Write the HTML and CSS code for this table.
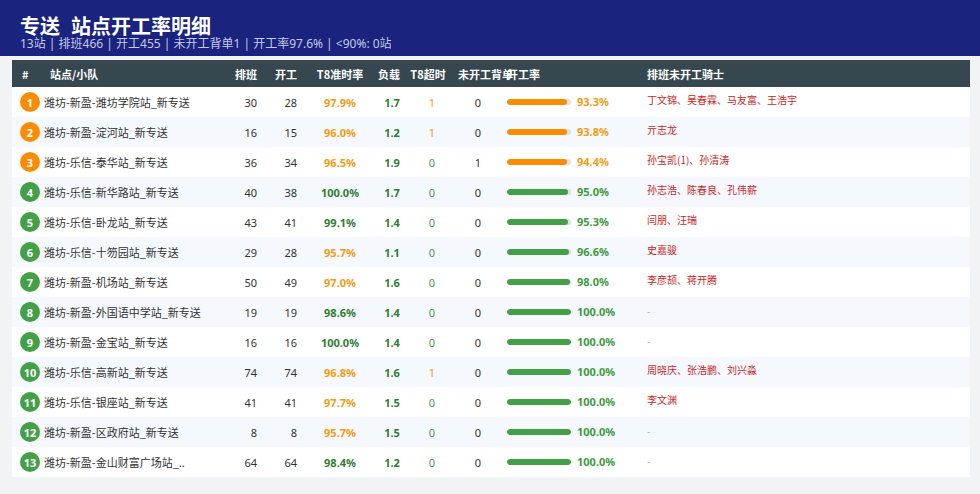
FILE: index.html
```html
<!DOCTYPE html>
<html lang="zh-CN">
<head>
<meta charset="utf-8">
<title>专送 站点开工率明细</title>
<link rel="stylesheet" href="styles.css">
</head>
<body>
<header class="banner">
  <h1 class="title"><span class="t1">专送</span>站点开工率明细</h1>
  <div class="sub">13站 | 排班466 | 开工455 | 未开工背单1 | 开工率97.6% | &lt;90%: 0站</div>
</header>
<main class="table">
  <div class="row head">
    <div class="c c1">#</div>
    <div class="c c2">站点/小队</div>
    <div class="c c3">排班</div>
    <div class="c c4">开工</div>
    <div class="c c5">T8准时率</div>
    <div class="c c6">负载</div>
    <div class="c c7">T8超时</div>
    <div class="c c8">未开工背单</div>
    <div class="c c9">开工率</div>
    <div class="c c10">排班未开工骑士</div>
  </div>

  <div class="row">
    <div class="c c1"><span class="badge or">1</span></div>
    <div class="c c2">潍坊-新盈-潍坊学院站_新专送</div>
    <div class="c c3">30</div><div class="c c4">28</div>
    <div class="c c5 b or-t">97.9%</div><div class="c c6 b gd">1.7</div>
    <div class="c c7 or-t">1</div><div class="c c8">0</div>
    <div class="c c9"><span class="track"><span class="fill or" style="width:93.3%"></span></span><span class="pct or-t">93.3%</span></div>
    <div class="c c10 names">丁文锦、吴春霖、马友富、王浩宇</div>
  </div>
  <div class="row">
    <div class="c c1"><span class="badge or">2</span></div>
    <div class="c c2">潍坊-新盈-淀河站_新专送</div>
    <div class="c c3">16</div><div class="c c4">15</div>
    <div class="c c5 b or-t">96.0%</div><div class="c c6 b gd">1.2</div>
    <div class="c c7 or-t">1</div><div class="c c8">0</div>
    <div class="c c9"><span class="track"><span class="fill or" style="width:93.8%"></span></span><span class="pct or-t">93.8%</span></div>
    <div class="c c10 names">亓志龙</div>
  </div>
  <div class="row">
    <div class="c c1"><span class="badge or">3</span></div>
    <div class="c c2">潍坊-乐信-泰华站_新专送</div>
    <div class="c c3">36</div><div class="c c4">34</div>
    <div class="c c5 b or-t">96.5%</div><div class="c c6 b gd">1.9</div>
    <div class="c c7 gl">0</div><div class="c c8">1</div>
    <div class="c c9"><span class="track"><span class="fill or" style="width:94.4%"></span></span><span class="pct or-t">94.4%</span></div>
    <div class="c c10 names">孙宝凯(1)、孙清涛</div>
  </div>
  <div class="row">
    <div class="c c1"><span class="badge gr">4</span></div>
    <div class="c c2">潍坊-乐信-新华路站_新专送</div>
    <div class="c c3">40</div><div class="c c4">38</div>
    <div class="c c5 b gd">100.0%</div><div class="c c6 b gd">1.7</div>
    <div class="c c7 gl">0</div><div class="c c8">0</div>
    <div class="c c9"><span class="track"><span class="fill gr" style="width:95%"></span></span><span class="pct gr-t">95.0%</span></div>
    <div class="c c10 names">孙志浩、陈春良、孔伟薪</div>
  </div>
  <div class="row">
    <div class="c c1"><span class="badge gr">5</span></div>
    <div class="c c2">潍坊-乐信-卧龙站_新专送</div>
    <div class="c c3">43</div><div class="c c4">41</div>
    <div class="c c5 b gd">99.1%</div><div class="c c6 b gd">1.4</div>
    <div class="c c7 gl">0</div><div class="c c8">0</div>
    <div class="c c9"><span class="track"><span class="fill gr" style="width:95.3%"></span></span><span class="pct gr-t">95.3%</span></div>
    <div class="c c10 names">闫朋、汪瑞</div>
  </div>
  <div class="row">
    <div class="c c1"><span class="badge gr">6</span></div>
    <div class="c c2">潍坊-乐信-十笏园站_新专送</div>
    <div class="c c3">29</div><div class="c c4">28</div>
    <div class="c c5 b or-t">95.7%</div><div class="c c6 b gd">1.1</div>
    <div class="c c7 gl">0</div><div class="c c8">0</div>
    <div class="c c9"><span class="track"><span class="fill gr" style="width:96.6%"></span></span><span class="pct gr-t">96.6%</span></div>
    <div class="c c10 names">史嘉骏</div>
  </div>
  <div class="row">
    <div class="c c1"><span class="badge gr">7</span></div>
    <div class="c c2">潍坊-新盈-机场站_新专送</div>
    <div class="c c3">50</div><div class="c c4">49</div>
    <div class="c c5 b or-t">97.0%</div><div class="c c6 b gd">1.6</div>
    <div class="c c7 gl">0</div><div class="c c8">0</div>
    <div class="c c9"><span class="track"><span class="fill gr" style="width:98%"></span></span><span class="pct gr-t">98.0%</span></div>
    <div class="c c10 names">李彦颉、蒋开腾</div>
  </div>
  <div class="row">
    <div class="c c1"><span class="badge gr">8</span></div>
    <div class="c c2">潍坊-新盈-外国语中学站_新专送</div>
    <div class="c c3">19</div><div class="c c4">19</div>
    <div class="c c5 b gd">98.6%</div><div class="c c6 b gd">1.4</div>
    <div class="c c7 gl">0</div><div class="c c8">0</div>
    <div class="c c9"><span class="track"><span class="fill gr" style="width:100%"></span></span><span class="pct gr-t">100.0%</span></div>
    <div class="c c10 names none">-</div>
  </div>
  <div class="row">
    <div class="c c1"><span class="badge gr">9</span></div>
    <div class="c c2">潍坊-新盈-金宝站_新专送</div>
    <div class="c c3">16</div><div class="c c4">16</div>
    <div class="c c5 b gd">100.0%</div><div class="c c6 b gd">1.4</div>
    <div class="c c7 gl">0</div><div class="c c8">0</div>
    <div class="c c9"><span class="track"><span class="fill gr" style="width:100%"></span></span><span class="pct gr-t">100.0%</span></div>
    <div class="c c10 names none">-</div>
  </div>
  <div class="row">
    <div class="c c1"><span class="badge gr">10</span></div>
    <div class="c c2">潍坊-乐信-高新站_新专送</div>
    <div class="c c3">74</div><div class="c c4">74</div>
    <div class="c c5 b or-t">96.8%</div><div class="c c6 b gd">1.6</div>
    <div class="c c7 or-t">1</div><div class="c c8">0</div>
    <div class="c c9"><span class="track"><span class="fill gr" style="width:100%"></span></span><span class="pct gr-t">100.0%</span></div>
    <div class="c c10 names">周晓庆、张浩鹏、刘兴淼</div>
  </div>
  <div class="row">
    <div class="c c1"><span class="badge gr">11</span></div>
    <div class="c c2">潍坊-乐信-银座站_新专送</div>
    <div class="c c3">41</div><div class="c c4">41</div>
    <div class="c c5 b or-t">97.7%</div><div class="c c6 b gd">1.5</div>
    <div class="c c7 gl">0</div><div class="c c8">0</div>
    <div class="c c9"><span class="track"><span class="fill gr" style="width:100%"></span></span><span class="pct gr-t">100.0%</span></div>
    <div class="c c10 names">李文渊</div>
  </div>
  <div class="row">
    <div class="c c1"><span class="badge gr">12</span></div>
    <div class="c c2">潍坊-新盈-区政府站_新专送</div>
    <div class="c c3">8</div><div class="c c4">8</div>
    <div class="c c5 b or-t">95.7%</div><div class="c c6 b gd">1.5</div>
    <div class="c c7 gl">0</div><div class="c c8">0</div>
    <div class="c c9"><span class="track"><span class="fill gr" style="width:100%"></span></span><span class="pct gr-t">100.0%</span></div>
    <div class="c c10 names none">-</div>
  </div>
  <div class="row">
    <div class="c c1"><span class="badge gr">13</span></div>
    <div class="c c2">潍坊-新盈-金山财富广场站_..</div>
    <div class="c c3">64</div><div class="c c4">64</div>
    <div class="c c5 b gd">98.4%</div><div class="c c6 b gd">1.2</div>
    <div class="c c7 gl">0</div><div class="c c8">0</div>
    <div class="c c9"><span class="track"><span class="fill gr" style="width:100%"></span></span><span class="pct gr-t">100.0%</span></div>
    <div class="c c10 names none">-</div>
  </div>
</main>
</body>
</html>
```
FILE: styles.css
```css
* { box-sizing: border-box; }
html, body { margin: 0; padding: 0; }
body {
  background: #f2f3f5;
  font-family: "Noto Sans", "Noto Sans CJK SC", sans-serif;
  color: #333;
  width: 980px;
  height: 494px;
  overflow: hidden;
}
.banner {
  background: #1a237e;
  color: #fff;
  height: 56px;
  padding: 14px 20px 0;
}
.title {
  margin: 0;
  font-family: "Noto Sans CJK SC", sans-serif;
  font-size: 20px;
  font-weight: 700;
  line-height: 24px;
}
.t1 { margin-right: 11px; }
.sub {
  font-family: "Noto Sans", "Noto Sans CJK SC", sans-serif;
  font-size: 12px;
  line-height: 12px;
  color: #c5cae9;
}
.table {
  margin: 4px 10px 0 12px;
  width: 958px;
  background: #fff;
}
.row {
  display: grid;
  grid-template-columns: 32px 186px 32px 40px 76px 28px 52px 40px 142px 1fr;
  height: 30px;
  font-size: 11px;
  align-items: center;
}
.row:nth-child(odd) { background: #f5f8fd; }
.row.head {
  background: #37474f;
  color: #fff;
  height: 27px;
  font-weight: 700;
  font-family: "Noto Sans CJK SC", sans-serif;
}
.c { white-space: nowrap; }
.c1 { padding-left: 8px; display: flex; }
.head .c1 { padding-left: 10px; }
.c2 { font-family: "Noto Sans CJK SC", sans-serif; color: #333; }
.head .c2 { padding-left: 6px; color: #fff; }
.c3, .c4 { text-align: right; padding-right: 5px; }
.c5, .c6, .c7, .c8 { text-align: center; }
.head .c6 { padding-right: 10px; }
.head .c7 { padding-right: 8px; }
.head .c8 { text-align: left; overflow: visible; }
.c9 { padding-left: 9px; display: flex; align-items: center; }
.head .c9 { display: block; }
.c10 { padding-left: 7px; }
.badge {
  width: 20px; height: 20px;
  border-radius: 50%;
  color: #fff;
  font-weight: 700;
  font-size: 11px;
  display: flex; align-items: center; justify-content: center;
  line-height: 1;
}
.badge.or { background: #fb8c00; }
.badge.gr { background: #43a047; }
.b { font-weight: 700; }
.or-t { color: #f39c12; }
.gd { color: #2e7d32; }
.gl { color: #4c9a50; }
.gr-t { color: #3d9a40; font-weight: 700; }
.pct { font-weight: 700; margin-left: 6px; margin-top: -2px; }
.track {
  width: 64px; height: 6px;
  background: #e0e0e0;
  border-radius: 3px;
  display: block;
  overflow: hidden;
}
.fill { display: block; height: 100%; border-radius: 3px; }
.fill.or { background: #fb8c00; }
.fill.gr { background: #43a047; }
.names {
  align-self: start;
  padding-top: 5px;
  font-family: "Noto Sans CJK SC", sans-serif;
  font-size: 10px;
  color: #c62828;
}
.names.none { color: #aaa; padding-top: 6px; }
```
